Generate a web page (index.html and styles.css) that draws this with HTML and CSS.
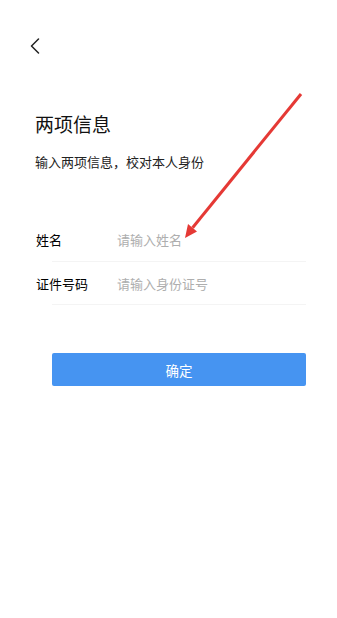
FILE: index.html
```html
<!DOCTYPE html>
<html lang="zh-CN">
<head>
<meta charset="utf-8">
<title>两项信息</title>
<link rel="stylesheet" href="styles.css">
</head>
<body>
<div class="page">
  <div class="topbar">
    <svg class="back" width="12" height="16" viewBox="0 0 12 16"><path d="M8.5 1 L1.5 8 L8.5 15" fill="none" stroke="#222" stroke-width="1.5" stroke-linecap="round" stroke-linejoin="round"/></svg>
  </div>
  <h1 class="title">两项信息</h1>
  <p class="subtitle">输入两项信息，校对本人身份</p>
  <div class="form">
    <div class="row">
      <span class="label">姓名</span>
      <input class="field" type="text" placeholder="请输入姓名">
    </div>
    <div class="divider"></div>
    <div class="row row2">
      <span class="label">证件号码</span>
      <input class="field" type="text" placeholder="请输入身份证号">
    </div>
    <div class="divider"></div>
  </div>
  <button class="submit" type="button">确定</button>
  <svg class="annotation" width="337" height="618" viewBox="0 0 337 618">
    <line x1="301" y1="94" x2="192.6" y2="227.7" stroke="#e53935" stroke-width="3" stroke-linecap="butt"/>
    <polygon points="185,238 197,231.5 188,224" fill="#e53935"/>
  </svg>
</div>
</body>
</html>
```
FILE: styles.css
```css
html, body {
  margin: 0;
  padding: 0;
  background: #fff;
}
body {
  font-family: "Noto Sans CJK SC", "Noto Sans", sans-serif;
  color: #111;
}
.page {
  position: relative;
  width: 337px;
  height: 618px;
  overflow: hidden;
}
.topbar {
  padding: 38px 0 0 30px;
  height: 16px;
}
.back {
  display: block;
}
.title {
  margin: 60px 0 0 35px;
  font-size: 19px;
  line-height: 19px;
  font-weight: 400;
  color: #111;
}
.subtitle {
  margin: 22px 0 0 35px;
  font-size: 13px;
  line-height: 14px;
  color: #222;
}
.form {
  margin-top: 49px;
}
.row {
  display: flex;
  align-items: center;
  height: 43px;
  padding-left: 36px;
}
.row2 {
  height: 42px;
}
.label {
  width: 81px;
  font-size: 13px;
  color: #000;
}
.field {
  flex: 1;
  border: none;
  outline: none;
  padding: 0;
  margin: 0;
  font-family: inherit;
  font-size: 13px;
  color: #111;
  background: transparent;
  min-width: 0;
}
.field::placeholder {
  color: #aeaeae;
}
.divider {
  height: 1px;
  margin: 0 31px 0 52px;
  background: #f4f4f4;
}
.submit {
  display: block;
  margin: 48px 0 0 52px;
  width: 254px;
  height: 33px;
  border: none;
  border-radius: 2px;
  background: #4694f1;
  color: #fff;
  font-family: inherit;
  font-size: 13.5px;
  padding: 0;
}
.annotation {
  position: absolute;
  left: 0;
  top: 0;
  pointer-events: none;
}
```
